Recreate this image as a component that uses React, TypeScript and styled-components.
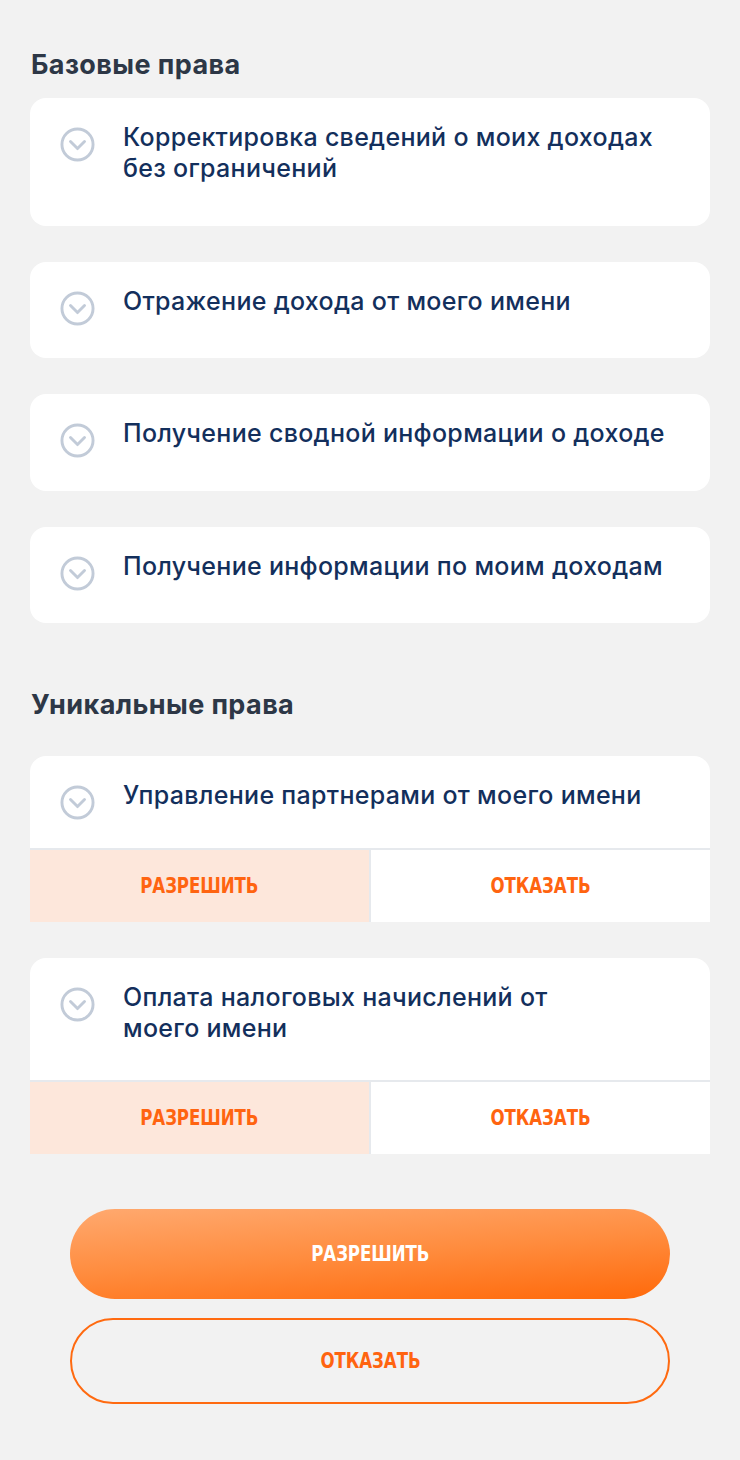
import React from 'react';
import styled, { createGlobalStyle } from 'styled-components';

const GlobalStyle = createGlobalStyle`
    html, body {
        margin: 0;
        padding: 0;
        background: #f2f2f2;
    }
    body {
        font-family: Inter, 'Noto Sans', sans-serif;
        -webkit-font-smoothing: antialiased;
    }
`;

const Page = styled.div`
    width: 740px;
    min-height: 1460px;
    box-sizing: border-box;
    padding: 48px 30px 40px;
    display: flex;
    flex-direction: column;
`;

const SectionTitle = styled.h2<{ $top?: number }>`
    margin: ${(p) => p.$top ?? 0}px 0 0 1px;
    font-size: 27px;
    line-height: 34px;
    font-weight: 700;
    color: #2d3746;
    letter-spacing: 0.4px;
`;

const List = styled.div<{ $top: number }>`
    display: flex;
    flex-direction: column;
    gap: 36px;
    margin-top: ${(p) => p.$top}px;
`;

const Card = styled.div<{ $withActions?: boolean }>`
    background: #fff;
    border-radius: ${(p) => (p.$withActions ? '16px 16px 0 0' : '16px')};
    overflow: hidden;
`;

const CardHead = styled.div<{ $bottom: number }>`
    display: flex;
    align-items: flex-start;
    gap: 28px;
    padding: 24px 40px ${(p) => p.$bottom}px 30px;
`;

const Chevron = styled.svg`
    flex: none;
    width: 35px;
    height: 35px;
    margin: 5px 0 -9px;
`;

const Title = styled.div`
    font-size: 25px;
    line-height: 31px;
    font-weight: 500;
    color: #132f5c;
    letter-spacing: 0.3px;
`;

const Actions = styled.div`
    display: grid;
    grid-template-columns: 339px 1fr;
    gap: 2px;
    border-top: 2px solid #e6e9ed;
    background: #e6e9ed;
`;

// narrow, DIN-like caps used on all buttons
const Label = styled.span`
    display: inline-block;
    font-family: 'DejaVu Sans Condensed', 'DejaVu Sans', sans-serif;
    font-stretch: condensed;
    font-weight: 700;
    font-size: 22px;
    line-height: 1;
    letter-spacing: -0.1px;
    transform: scaleX(0.84);
`;

const Choice = styled.button<{ $active?: boolean }>`
    height: 72px;
    border: none;
    margin: 0;
    padding: 0;
    background: ${(p) => (p.$active ? '#fde7db' : '#fff')};
    color: #ff6410;
    cursor: pointer;
`;

const Footer = styled.div`
    display: flex;
    flex-direction: column;
    gap: 19px;
    padding: 55px 40px 0;
`;

const MainButton = styled.button<{ $outline?: boolean }>`
    height: ${(p) => (p.$outline ? 86 : 90)}px;
    border-radius: 45px;
    border: ${(p) => (p.$outline ? '2px solid #ff6a10' : 'none')};
    background: ${(p) =>
        p.$outline ? 'transparent' : 'linear-gradient(176deg, #ffa96f 0%, #ff8c3e 50%, #ff690a 100%)'};
    color: ${(p) => (p.$outline ? '#ff6410' : '#fff')};
    cursor: pointer;
`;

const ChevronIcon = () => (
    <Chevron viewBox="0 0 36 36" fill="none">
        <circle cx="18" cy="18" r="16" stroke="#c2cbd8" strokeWidth="3" />
        <path
            d="M10.8 15 L18 22.2 L25.2 15"
            stroke="#c2cbd8"
            strokeWidth="3"
            strokeLinecap="round"
            strokeLinejoin="round"
        />
    </Chevron>
);

const basic = [
    'Корректировка сведений о моих доходах без ограничений',
    'Отражение дохода от моего имени',
    'Получение сводной информации о доходе',
    'Получение информации по моим доходам',
];

// lines are broken as in the design
const unique: string[][] = [
    ['Управление партнерами от моего имени'],
    ['Оплата налоговых начислений от', 'моего имени'],
];

const App = () => {
    return (
        <Page>
            <GlobalStyle />
            <SectionTitle>Базовые права</SectionTitle>
            <List $top={16}>
                {basic.map((text) => (
                    <Card key={text}>
                        <CardHead $bottom={41.5}>
                            <ChevronIcon />
                            <Title>{text}</Title>
                        </CardHead>
                    </Card>
                ))}
            </List>

            <SectionTitle $top={65}>Уникальные права</SectionTitle>
            <List $top={34}>
                {unique.map((lines) => (
                    <Card key={lines[0]} $withActions>
                        <CardHead $bottom={36.5}>
                            <ChevronIcon />
                            <Title>
                                {lines.map((l, i) => (
                                    <React.Fragment key={l}>
                                        {i > 0 && <br />}
                                        {l}
                                    </React.Fragment>
                                ))}
                            </Title>
                        </CardHead>
                        <Actions>
                            <Choice $active>
                                <Label>РАЗРЕШИТЬ</Label>
                            </Choice>
                            <Choice>
                                <Label>ОТКАЗАТЬ</Label>
                            </Choice>
                        </Actions>
                    </Card>
                ))}
            </List>

            <Footer>
                <MainButton>
                    <Label>РАЗРЕШИТЬ</Label>
                </MainButton>
                <MainButton $outline>
                    <Label>ОТКАЗАТЬ</Label>
                </MainButton>
            </Footer>
        </Page>
    );
};

export default App;
